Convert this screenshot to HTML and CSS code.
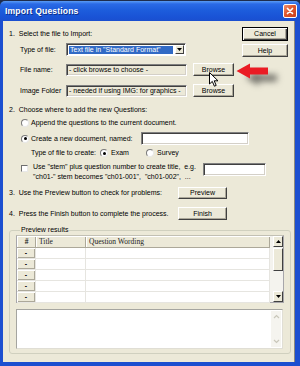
FILE: index.html
```html
<!DOCTYPE html>
<html>
<head>
<meta charset="utf-8">
<title>Import Questions</title>
<link rel="stylesheet" href="styles.css">
</head>
<body>
<div class="window">
  <div class="titlebar">
    <span class="title">Import Questions</span>
    <span class="close"><svg width="12" height="12" viewBox="0 0 12 12"><path d="M3.5 3.5 L8.5 8.5 M8.5 3.5 L3.5 8.5" stroke="#fff" stroke-width="1.7" stroke-linecap="round"/></svg></span>
  </div>
  <div class="frame">
    <div class="client">
      <div class="top">
        <div class="left">
          <div class="row r1">1.&nbsp; Select the file to Import:</div>
          <div class="row r2">
            <span class="lbl">Type of file:</span>
            <div class="select">
              <span class="val">Text file in "Standard Format"</span>
              <span class="ddbtn"><svg width="5" height="3" viewBox="0 0 5 3"><path d="M0 0 H5 L2.5 3 Z" fill="#000"/></svg></span>
            </div>
          </div>
          <div class="row r3">
            <span class="lbl">File name:</span>
            <div class="tb ro">- click browse to choose -</div>
            <span class="btn browse">Browse</span>
          </div>
          <div class="row r4">
            <span class="lbl">Image Folder</span>
            <div class="tb ro">- needed if using IMG: for graphics -</div>
            <span class="btn browse">Browse</span>
          </div>
        </div>
        <div class="side">
          <span class="btn def">Cancel</span>
          <span class="btn help">Help</span>
        </div>
      </div>

      <div class="row s2">2.&nbsp; Choose where to add the new Questions:</div>
      <div class="row opt append"><span class="radio"></span>Append the questions to the current document.</div>
      <div class="row opt create"><span class="radio on"></span><span class="createlbl">Create a new document, named:</span><div class="tb name"></div></div>
      <div class="row ftype">
        <span class="ftlbl">Type of file to create:</span>
        <span class="radio on"></span><span class="exam">Exam</span>
        <span class="radio"></span><span class="survey">Survey</span>
      </div>
      <div class="row opt stem">
        <span class="check"></span>
        <span class="stemtxt">Use "stem" plus question number to create title,&nbsp; e.g.<br>"ch01-" stem becomes "ch01-001",&nbsp; "ch01-002",&nbsp; ...</span>
        <div class="tb stembox"></div>
      </div>
      <div class="row s3"><span class="steplbl">3.&nbsp; Use the Preview button to check for problems:</span><span class="btn act">Preview</span></div>
      <div class="row s4"><span class="steplbl">4.&nbsp; Press the Finish button to complete the process.</span><span class="btn act fin">Finish</span></div>

      <div class="group">
        <span class="legend">Preview results</span>
        <div class="grid">
          <div class="table">
            <div class="tr th"><span class="c0">#</span><span class="c1">Title</span><span class="c2">Question Wording</span></div>
            <div class="tr"><span class="c0">-</span><span class="c1"></span><span class="c2"></span></div>
            <div class="tr"><span class="c0">-</span><span class="c1"></span><span class="c2"></span></div>
            <div class="tr"><span class="c0">-</span><span class="c1"></span><span class="c2"></span></div>
            <div class="tr"><span class="c0">-</span><span class="c1"></span><span class="c2"></span></div>
            <div class="tr"><span class="c0">-</span><span class="c1"></span><span class="c2"></span></div>
          </div>
          <div class="vscroll">
            <span class="sbtn"><svg width="5" height="3" viewBox="0 0 5 3"><path d="M0 3 H5 L2.5 0 Z" fill="#000"/></svg></span>
            <span class="thumb"></span>
            <span class="track"></span>
            <span class="sbtn"><svg width="5" height="3" viewBox="0 0 5 3"><path d="M0 0 H5 L2.5 3 Z" fill="#000"/></svg></span>
          </div>
        </div>
        <div class="memo">
          <div class="memoscroll">
            <svg width="7" height="5" viewBox="0 0 7 5"><path d="M1 4 L3.5 1.5 L6 4" fill="none" stroke="#c9c7ba" stroke-width="1.2"/></svg>
            <svg width="7" height="5" viewBox="0 0 7 5"><path d="M1 1 L3.5 3.5 L6 1" fill="none" stroke="#c9c7ba" stroke-width="1.2"/></svg>
          </div>
        </div>
      </div>

      <svg class="redarrow" width="34" height="17" viewBox="0 0 34 17"><path d="M0.5 8 L14 0.5 L14 4.5 L32 4.5 L32 11.5 L14 11.5 L14 15.5 Z" fill="#ea1c24"/></svg>
      <svg class="cursor" width="10" height="16" viewBox="0 0 10 16"><path d="M0.5 0.5 L0.5 12 L3.3 9.4 L5.4 14.2 L7.2 13.4 L5.2 8.8 L9 8.8 Z" fill="#fff" stroke="#000" stroke-width="1" stroke-linejoin="round"/></svg>
    </div>
  </div>
</div>
</body>
</html>
```

FILE: styles.css
```css
* { box-sizing: border-box; margin: 0; padding: 0; }
html, body { width: 300px; height: 366px; overflow: hidden; }
body {
  background: #1e2c4c;
  font-family: "Liberation Sans", Arial, sans-serif;
  font-size: 7px;
  line-height: 10px;
  color: #000;
}
.window {
  margin-top: 1px;
  height: 365px;
  width: 300px;
  display: flex;
  flex-direction: column;
}
.titlebar {
  height: 20px;
  flex: none;
  display: flex;
  align-items: center;
  justify-content: space-between;
  padding-left: 5px;
  padding-right: 3px;
  border-radius: 5px 5px 0 0;
  background: linear-gradient(#5a9cf5 0, #2a6ae6 3px, #1d5ddc 9px, #1953d6 16px, #1a4fcf 20px);
}
.title {
  color: #fff;
  font-weight: bold;
  font-size: 8.6px;
  letter-spacing: 0.15px;
  text-shadow: 1px 1px 0 #0d2e8a;
}
.close {
  width: 14px;
  height: 14px;
  margin-top: -1px;
  border: 1px solid #fff;
  border-radius: 2px;
  background: linear-gradient(135deg, #f09070 0, #e0582e 45%, #c8401c 100%);
  display: flex;
  align-items: center;
  justify-content: center;
}
.frame {
  flex: 1;
  background: #1c4fd0;
  padding: 0 6px 4px 3px;
  display: flex;
}
.client {
  flex: 1;
  background: #ece9d8;
  padding: 6px 3px 0 6px;
  position: relative;
  border-right: 1px solid #8d8a7e;
}
.row { display: flex; align-items: center; white-space: nowrap; }
.top { display: flex; padding-right: 3px; }
.left { flex: 1; }
.side { width: 46px; display: flex; flex-direction: column; }
.r1 { height: 14px; }
.r2 { margin-top: 2px; height: 13px; }
.r3 { margin-top: 7px; height: 13px; }
.r4 { margin-top: 8px; height: 13px; }
.lbl { margin-left: 11px; width: 46px; }

.btn {
  display: flex;
  align-items: center;
  justify-content: center;
  background: #ece9d8;
  border: 1px solid;
  border-color: #fff #404040 #404040 #fff;
  box-shadow: inset -1px -1px 0 #aca899;
}
.def {
  height: 14px;
  border-color: #000;
  box-shadow: inset 1px 1px 0 #fff, inset -1px -1px 0 #404040, inset -2px -2px 0 #aca899;
}
.help { height: 13px; margin-top: 3px; }
.browse { width: 41px; height: 13px; }

.select {
  width: 120px;
  height: 13px;
  display: flex;
  background: #fff;
  border: 1px solid;
  border-color: #808080 #fff #fff #808080;
  box-shadow: inset 1px 1px 0 #404040;
  padding: 2px 1px 1px 2px;
}
.val {
  flex: 1;
  background: #316ac5;
  color: #fff;
  line-height: 8px;
  padding-left: 1px;
  margin-right: 2px;
  overflow: hidden;
}
.ddbtn {
  width: 9px;
  margin-top: -1px;
  display: flex;
  align-items: center;
  justify-content: center;
  background: #ece9d8;
  border: 1px solid;
  border-color: #fff #404040 #404040 #fff;
}
.tb {
  height: 12px;
  background: #fff;
  border: 1px solid;
  border-color: #808080 #fff #fff #808080;
  box-shadow: inset 1px 1px 0 #404040, inset -1px -1px 0 #d4d0c8;
  line-height: 10px;
  padding-left: 2px;
  overflow: hidden;
}
.tb.ro {
  width: 121px;
  background: #ece9d8;
  margin-right: 6px;
}

.s2 { margin-top: 7px; height: 12px; }
.opt { margin-left: 12px; }
.append { margin-top: 1px; height: 12px; }
.create { margin-top: 3px; height: 13px; }
.createlbl { width: 110px; }
.tb.name { width: 108px; height: 13px; }
.radio {
  width: 8px;
  height: 8px;
  flex: none;
  margin-right: 2px;
  border-radius: 50%;
  background: #fff;
  border: 1px solid;
  border-color: #7a7a7a #e8e8e8 #e8e8e8 #7a7a7a;
  display: flex;
  align-items: center;
  justify-content: center;
}
.radio.on::after {
  content: "";
  width: 3px;
  height: 3px;
  border-radius: 50%;
  background: #000;
}
.ftype { margin-top: 2px; height: 12px; padding-left: 22px; }
.ftlbl { width: 69px; }
.ftype .radio { margin-right: 3px; }
.exam { width: 35px; }
.stem { margin-top: 3px; height: 21px; align-items: flex-start; }
.check {
  width: 7px;
  height: 7px;
  flex: none;
  margin-top: 3px;
  margin-right: 5px;
  background: #fff;
  border: 1px solid;
  border-color: #6f6f6f #e8e8e8 #e8e8e8 #6f6f6f;
}
.stemtxt { width: 170px; line-height: 10px; }
.tb.stembox { width: 63px; height: 13px; margin-top: 1px; }
.s3 { margin-top: 4px; height: 12px; }
.s4 { margin-top: 8px; height: 13px; }
.steplbl { width: 169px; }
.act { width: 49px; height: 12px; }
.act.fin { height: 13px; }

.group {
  margin-top: 10px;
  width: 282px;
  height: 124px;
  border: 1px solid #d0d0bf;
  border-radius: 3px;
  padding: 0 0 0 6px;
}
.legend {
  display: block;
  width: fit-content;
  margin-top: -6px;
  margin-left: 4px;
  padding: 0 1px;
  background: #ece9d8;
  line-height: 10px;
}
.grid {
  width: 268px;
  height: 68px;
  display: flex;
  border: 1px solid #a7a6aa;
  border-top-color: #c2c0b4;
  background: #f4f3ee;
}
.table { width: 253px; background: #fff; }
.tr { display: flex; height: 11px; border-bottom: 1px solid #e6e5e0; }
.tr.th { height: 12px; background: #ece9d8; border-bottom: 1px solid #aca899; }
.tr span { border-right: 1px solid #e6e5e0; line-height: 10px; }
.c0 {
  width: 19px;
  text-align: center;
  background: #ece9d8;
  box-shadow: inset 1px 1px 0 #fff, inset -1px -1px 0 #aca899;
  font-weight: bold;
}
.c1 { width: 50px; }
.c2 { flex: 1; }
.th span {
  font-family: "Liberation Serif", "Times New Roman", serif;
  font-size: 7.5px;
  font-weight: bold;
  color: #222;
  box-shadow: inset 1px 1px 0 #fff, inset -1px 0 0 #aca899;
  border-right: 0;
  line-height: 11px;
}
.th .c1, .th .c2 { padding-left: 3px; font-weight: normal; }
.vscroll {
  width: 10px;
  margin-left: 3px;
  display: flex;
  flex-direction: column;
}
.sbtn {
  height: 11px;
  flex: none;
  display: flex;
  align-items: center;
  justify-content: center;
  background: #ece9d8;
  border: 1px solid;
  border-color: #fff #404040 #404040 #fff;
}
.thumb {
  height: 23px;
  margin-top: 1px;
  flex: none;
  background: #ece9d8;
  border: 1px solid;
  border-color: #fff #404040 #404040 #fff;
}
.track {
  flex: 1;
  background: #f4f3ee;
}
.memo {
  margin-top: 6px;
  width: 267px;
  height: 40px;
  background: #fff;
  border: 1px solid;
  border-color: #a5a5a0 #e0ded5 #e0ded5 #a5a5a0;
  display: flex;
  justify-content: flex-end;
}
.memoscroll {
  width: 10px;
  margin: 1px 1px 1px 0;
  background: #f5f4ef;
  display: flex;
  flex-direction: column;
  align-items: center;
  justify-content: space-between;
  padding: 3px 0;
}

.redarrow {
  position: absolute;
  left: 233px;
  top: 42px;
  filter: drop-shadow(9px 7px 3px rgba(20, 20, 20, 0.55));
}
.cursor {
  position: absolute;
  left: 206px;
  top: 51px;
}
```
